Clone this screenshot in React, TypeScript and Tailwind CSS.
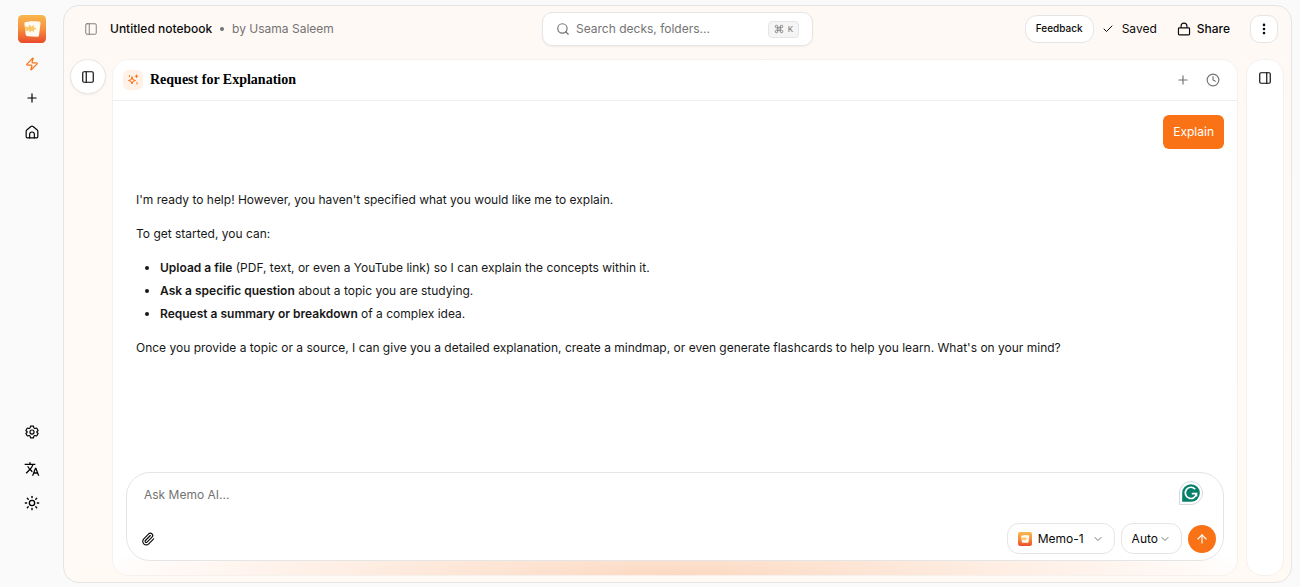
import React, { useState } from "react";
import {
  ArrowUp,
  Check,
  ChevronDown,
  Clock,
  Command,
  EllipsisVertical,
  PanelLeft,
  PanelRight,
  Paperclip,
  Plus,
  Search,
  Sun,
  Zap,
} from "lucide-react";
import { MdTranslate } from "react-icons/md";

const Logo: React.FC<{ className: string; id: string }> = ({ className, id }) => (
  <svg viewBox="0 0 28 28" className={className} aria-hidden="true">
    <defs>
      <linearGradient id={id} x1="0" y1="0" x2="0" y2="1">
        <stop offset="0" stopColor="#f8b84e" />
        <stop offset="0.5" stopColor="#f6903f" />
        <stop offset="1" stopColor="#ea4a2c" />
      </linearGradient>
    </defs>
    <rect width="28" height="28" rx="4.5" fill={`url(#${id})`} />
    <path
      d="M6.4 8.4 Q6.3 7 7.7 6.9 L12 6.6 L12.6 5.9 L21 6.6 Q22.7 6.8 22.5 8.5 L21 20.2 Q20.8 21.8 19.2 21.7 L9.4 21.3 Q8 21.2 7.8 19.8 L7.4 17.5 Z"
      fill="#fffaf0"
    />
    <path
      d="M6.9 11.5 L10.5 12 L11.5 9.6 L13.2 11.8 L15.8 10 L15.8 12.2 L18.4 13.7 L15.8 15 L16 17 L13.6 15.7 L11.9 17.4 L11.2 15.5 L7.4 16 Z"
      fill="#fbc76b"
    />
  </svg>
);

const Sparkle = () => (
  <svg
    viewBox="0 0 24 24"
    fill="none"
    stroke="currentColor"
    strokeWidth={2}
    strokeLinecap="round"
    strokeLinejoin="round"
    className="w-3 h-3"
    aria-hidden="true"
  >
    <path d="M10 6l1.8 5.2L17 13l-5.2 1.8L10 20l-1.8-5.2L3 13l5.2-1.8z" />
    <path d="M19 2v5M16.5 4.5h5M20 17v3M5 3v2" />
  </svg>
);

const Home = () => (
  <svg
    viewBox="0 0 24 24"
    fill="none"
    stroke="currentColor"
    strokeWidth={2}
    strokeLinecap="round"
    strokeLinejoin="round"
    className="w-3.5 h-3.5"
    aria-hidden="true"
  >
    <path d="M2 10.5a2.5 2.5 0 0 1 1-2l7.2-6a2.8 2.8 0 0 1 3.6 0l7.2 6a2.5 2.5 0 0 1 1 2V20a2 2 0 0 1-2 2H4a2 2 0 0 1-2-2z" />
    <path d="M8 22v-6a4 4 0 0 1 8 0v6" />
  </svg>
);

const Gear = () => (
  <svg
    viewBox="0 0 24 24"
    fill="none"
    stroke="currentColor"
    strokeWidth={2}
    strokeLinejoin="round"
    className="w-3.5 h-3.5"
    aria-hidden="true"
  >
    <path d="M9.5 2h5l.8 3 1.7 1 3-.8 2.5 4.3-2.2 2v1l2.2 2-2.5 4.3-3-.8-1.7 1-.8 3h-5l-.8-3-1.7-1-3 .8-2.5-4.3 2.2-2v-1l-2.2-2L4 5.2l3 .8 1.7-1z" />
    <circle cx="12" cy="12" r="3.5" />
  </svg>
);

const Lock = () => (
  <svg
    viewBox="0 0 24 24"
    fill="none"
    stroke="currentColor"
    strokeWidth={2}
    strokeLinejoin="round"
    className="w-3.5 h-3.5"
    aria-hidden="true"
  >
    <rect x="2.5" y="10" width="19" height="12" rx="1.5" />
    <path d="M7 10V7a5 5 0 0 1 10 0v3" />
  </svg>
);

const Grammarly = () => (
  <svg viewBox="0 0 24 24" className="w-6 h-6" aria-hidden="true">
    <path d="M12 .5A11.5 11.5 0 1 1 12 23.5H.5V12A11.5 11.5 0 0 1 12 .5z" fill="#fff" stroke="#d3d9de" />
    <path d="M12 3.2a8.8 8.8 0 1 1 0 17.6H3.2V12A8.8 8.8 0 0 1 12 3.2z" fill="#087f6b" />
    <path
      d="M16.2 8.2A5.6 5.6 0 1 0 17.5 12.7H12.8M17.4 12.7L17.4 15.4"
      fill="none"
      stroke="#fff"
      strokeWidth="1.7"
    />
  </svg>
);

const suggestions = [
  {
    title: "Upload a file",
    text: " (PDF, text, or even a YouTube link) so I can explain the concepts within it.",
  },
  { title: "Ask a specific question", text: " about a topic you are studying." },
  { title: "Request a summary or breakdown", text: " of a complex idea." },
];

const navButton = "flex h-[34px] w-8 items-center justify-center";

const Sidebar = () => (
  <nav className="flex w-[63px] shrink-0 flex-col items-center pl-px pt-2.5 pb-[63px] text-black">
    <a href="#" aria-label="Memo" className="mb-1">
      <Logo id="logo-nav" className="w-7 h-7" />
    </a>
    <button aria-label="Upgrade" className={navButton + " text-[#f97316]"}>
      <Zap className="w-3.5 h-3.5" />
    </button>
    <button aria-label="New" className={navButton}>
      <Plus className="w-3.5 h-3.5" />
    </button>
    <a href="#" aria-label="Home" className={navButton}>
      <Home />
    </a>
    <div className="flex-1" />
    <button aria-label="Settings" className={navButton + " mb-[3px]"}>
      <Gear />
    </button>
    <button aria-label="Language" className={navButton}>
      <MdTranslate className="w-4 h-4" />
    </button>
    <button aria-label="Theme" className={navButton}>
      <Sun className="w-4 h-4" />
    </button>
  </nav>
);

const Header = () => (
  <header className="grid h-[46px] shrink-0 grid-cols-[1fr_auto_1fr] items-center px-[13px] text-xs">
    <div className="flex items-center whitespace-nowrap pl-[7px]">
      <button aria-label="Toggle sidebar" className="mr-3 text-neutral-500">
        <PanelLeft className="w-3.5 h-3.5" strokeWidth={1.5} />
      </button>
      <h1 className="font-medium">Untitled notebook</h1>
      <span className="mx-2 h-1 w-1 rounded-full bg-neutral-500" />
      <span className="text-neutral-500">by Usama Saleem</span>
    </div>
    <label className="flex h-[34px] w-[271px] items-center gap-1.5 rounded-[10px] border border-neutral-200 bg-white px-[13px] shadow-xs">
      <Search className="w-3.5 h-3.5 shrink-0 text-neutral-500" />
      <input
        type="text"
        aria-label="Search"
        placeholder="Search decks, folders..."
        className="min-w-0 flex-1 bg-transparent outline-none placeholder:text-neutral-500"
      />
      <kbd className="flex h-[17px] items-center gap-1 rounded border border-neutral-200 bg-neutral-100 px-[5px] font-['Inter',sans-serif] text-[8px] text-neutral-500">
        <Command className="w-2.5 h-2.5" />K
      </kbd>
    </label>
    <div className="flex items-center justify-end whitespace-nowrap">
      <button className="h-7 rounded-xl border border-neutral-200 bg-white px-2.5 text-[10px] font-medium">
        Feedback
      </button>
      <span className="ml-2 flex items-center gap-2">
        <Check className="w-3 h-3" />
        Saved
      </span>
      <button className="ml-5 flex items-center gap-1.5 font-medium">
        <Lock />
        Share
      </button>
      <button
        aria-label="More"
        className="ml-5 flex h-7 w-7 items-center justify-center rounded-[10px] border border-neutral-200 bg-white"
      >
        <EllipsisVertical className="w-3.5 h-3.5" strokeWidth={2.5} />
      </button>
    </div>
  </header>
);

const Composer = () => {
  const [message, setMessage] = useState("");

  return (
    <form
      onSubmit={(e) => {
        e.preventDefault();
        setMessage("");
      }}
      className="mx-[13px] mb-3.5 rounded-3xl border border-neutral-200 bg-white pt-2 pr-[7px] pb-1.5 pl-3.5"
    >
      <div className="flex items-start pr-[13px]">
        <textarea
          aria-label="Message"
          rows={1}
          value={message}
          onChange={(e) => setMessage(e.target.value)}
          placeholder="Ask Memo AI..."
          className="h-[42px] flex-1 resize-none bg-transparent pt-1 pl-[3px] text-xs leading-5 outline-none placeholder:text-neutral-500"
        />
        <Grammarly />
      </div>
      <div className="flex items-center gap-1.5 text-xs">
        <button type="button" aria-label="Attach file" className="mr-auto">
          <Paperclip className="w-3.5 h-3.5" />
        </button>
        <button
          type="button"
          className="flex h-[31px] items-center rounded-xl border border-neutral-200 px-2.5"
        >
          <Logo id="logo-model" className="mr-1.5 w-3.5 h-3.5" />
          Memo-1
          <ChevronDown className="ml-2 w-3 h-3 text-neutral-500" />
        </button>
        <button
          type="button"
          className="flex h-[31px] items-center rounded-xl border border-neutral-200 px-2.5"
        >
          Auto
          <ChevronDown className="ml-px w-3 h-3 text-neutral-500" />
        </button>
        <button
          type="submit"
          aria-label="Send"
          className="flex h-7 w-7 items-center justify-center rounded-full bg-[#f97316] text-white"
        >
          <ArrowUp className="w-3.5 h-3.5" />
        </button>
      </div>
    </form>
  );
};

const Chat = () => (
  <main className="flex min-w-0 flex-1 flex-col overflow-hidden rounded-2xl border border-[#f7f1ee] bg-white bg-[radial-gradient(ellipse_52%_60px_at_50%_100%,#fcd8c0,#fff8f4_85%,#ffffff)]">
    <div className="flex h-[41px] shrink-0 items-center border-b border-neutral-200/70 pl-2.5 pr-[17px]">
      <span className="flex h-5 w-5 items-center justify-center rounded-md bg-[#fff0e8] text-[#f97316]">
        <Sparkle />
      </span>
      <h2 className="ml-[7px] flex-1 font-['Liberation_Serif',serif] text-sm font-bold text-black">
        Request for Explanation
      </h2>
      <button aria-label="New chat" className="mr-4 text-neutral-500">
        <Plus className="w-3.5 h-3.5" />
      </button>
      <button aria-label="History" className="text-neutral-500">
        <Clock className="w-3.5 h-3.5" />
      </button>
    </div>
    <div className="min-h-0 flex-1 overflow-hidden pt-3.5 text-xs">
      <div className="flex justify-end pr-[13px]">
        <p className="rounded-md bg-[#f97316] px-2.5 py-[7px] leading-5 text-white">Explain</p>
      </div>
      <div className="px-[23px] pt-10 leading-[22px] text-neutral-900">
        <p>I'm ready to help! However, you haven't specified what you would like me to explain.</p>
        <p className="mt-3">To get started, you can:</p>
        <ul className="mt-3 list-disc space-y-px pl-6">
          {suggestions.map((item) => (
            <li key={item.title}>
              <strong className="font-semibold">{item.title}</strong>
              {item.text}
            </li>
          ))}
        </ul>
        <p className="mt-3">
          Once you provide a topic or a source, I can give you a detailed explanation, create a mindmap, or even
          generate flashcards to help you learn. What's on your mind?
        </p>
      </div>
    </div>
    <Composer />
  </main>
);

const App = () => (
  <div className="flex h-screen bg-[#fafafb] pt-[5px] pr-2 pb-1 font-['Inter',sans-serif] text-neutral-950">
    <Sidebar />
    <div className="flex min-w-0 flex-1 flex-col rounded-2xl border border-neutral-200 bg-linear-to-b from-[#fff9f6] to-[#fffaf4]">
      <Header />
      <div className="flex min-h-0 flex-1 pt-[7px] pr-[7px] pb-1.5 pl-1.5">
        <button
          aria-label="Open sources"
          className="mr-1.5 flex h-[35px] w-9 shrink-0 items-center justify-center rounded-full border border-neutral-200 bg-white shadow-xs"
        >
          <PanelLeft className="w-3.5 h-3.5" />
        </button>
        <Chat />
        <aside className="ml-2 flex w-[38px] shrink-0 justify-center rounded-2xl border border-[#f7f1ee] bg-white pt-[11px]">
          <button aria-label="Open panel" className="h-3.5">
            <PanelRight className="w-3.5 h-3.5" />
          </button>
        </aside>
      </div>
    </div>
  </div>
);

export default App;
